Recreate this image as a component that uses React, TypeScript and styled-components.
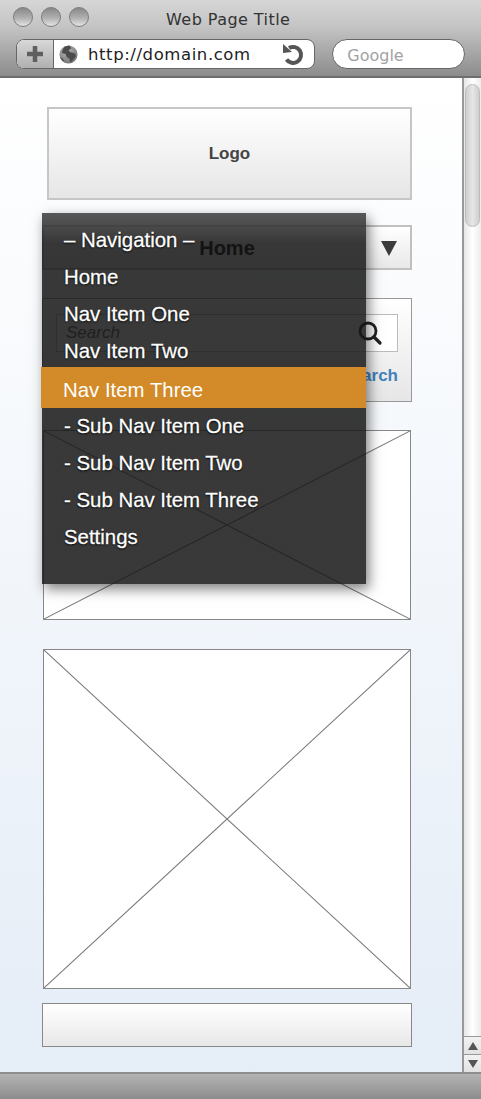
import React from "react";
import styled, { createGlobalStyle } from "styled-components";

////////////////////////////////////////////////////////////////////////////////
// Data
////////////////////////////////////////////////////////////////////////////////
const navItems = [
  { label: "– Navigation –" },
  { label: "Home" },
  { label: "Nav Item One" },
  { label: "Nav Item Two" },
  { label: "Nav Item Three", active: true },
  { label: "- Sub Nav Item One" },
  { label: "- Sub Nav Item Two" },
  { label: "- Sub Nav Item Three" },
  { label: "Settings" },
];

////////////////////////////////////////////////////////////////////////////////
// Styles
////////////////////////////////////////////////////////////////////////////////
const GlobalStyle = createGlobalStyle`
  html, body {
    margin: 0;
    padding: 0;
    background: #fff;
    font-family: "Liberation Sans", Arial, sans-serif;
  }
`;

const Window = styled.div`
  width: 481px;
  height: 1099px;
  display: flex;
  flex-direction: column;
  overflow: hidden;
`;

const Chrome = styled.header`
  height: 78px;
  box-sizing: border-box;
  flex: none;
  padding: 7px 16px 0;
  border-bottom: 2px solid #6e6e6e;
  background: linear-gradient(#d6d6d6, #c4c4c4 35%, #8c8c8c);
`;

const TitleRow = styled.div`
  height: 32px;
  display: flex;
  align-items: flex-start;
`;

const Lights = styled.div`
  display: flex;
  gap: 8px;
  margin-left: -3px;
`;

const Light = styled.span`
  width: 20px;
  height: 20px;
  box-sizing: border-box;
  border-radius: 50%;
  border: 1px solid #7c7c7c;
  background: linear-gradient(#888, #b0b0b0 55%, #e4e4e4);
`;

const PageTitle = styled.div`
  flex: 1;
  margin: 3px 0 0 77px;
  color: #333;
  font-family: "DejaVu Sans", sans-serif;
  font-size: 16px;
  line-height: 20px;
  letter-spacing: 0.45px;
`;

const ToolRow = styled.div`
  display: flex;
  gap: 17px;
`;

const AddressBar = styled.div`
  width: 300px;
  height: 30px;
  box-sizing: border-box;
  display: flex;
  align-items: center;
  overflow: hidden;
  border: 1px solid #666;
  border-radius: 8px;
  background: #fff;
`;

const AddButton = styled.div`
  width: 36px;
  height: 100%;
  flex: none;
  display: flex;
  align-items: center;
  justify-content: center;
  border-right: 1px solid #666;
  background: linear-gradient(#d8d8d8, #b0b0b0);
`;

const PlusMark = styled.svg`
  width: 18px;
  height: 18px;
`;

const Globe = styled.svg`
  width: 19px;
  height: 19px;
  margin-left: 5px;
  flex: none;
`;

const Url = styled.div`
  flex: 1;
  margin: 1px 0 0 10px;
  color: #222;
  font-family: "DejaVu Sans", sans-serif;
  font-size: 16.5px;
  letter-spacing: 0.58px;
`;

const Reload = styled.svg`
  width: 24px;
  height: 24px;
  margin: 2px 9px 0 0;
  flex: none;
`;

const GoogleBox = styled.div`
  width: 133px;
  height: 30px;
  box-sizing: border-box;
  padding-left: 14px;
  border: 1px solid #666;
  border-radius: 15px;
  background: #fff;
  color: #a2a2a2;
  font-family: "DejaVu Sans", sans-serif;
  font-size: 16px;
  line-height: 31px;
`;

const Body = styled.div`
  position: relative;
  flex: 1;
  min-height: 0;
  display: flex;
`;

const Page = styled.main`
  flex: 1;
  box-sizing: border-box;
  padding: 29px 50px 0 42px;
  display: flex;
  flex-direction: column;
  background: linear-gradient(#fff, #e5edf7);
`;

const Logo = styled.div`
  height: 93px;
  box-sizing: border-box;
  margin-left: 5px;
  display: flex;
  align-items: center;
  justify-content: center;
  border: 2px solid #c6c6c6;
  background: linear-gradient(#fff, #e6e6e6);
  color: #444;
  font-size: 17px;
  font-weight: bold;
`;

const Select = styled.div`
  height: 45px;
  box-sizing: border-box;
  margin-top: 25px;
  padding-top: 1px;
  position: relative;
  display: flex;
  align-items: center;
  justify-content: center;
  border: 2px solid #c0c0c0;
  background: linear-gradient(#fff, #e8e8e8);
  color: #000;
  font-size: 20px;
  font-weight: bold;
`;

const Caret = styled.span`
  position: absolute;
  right: 13px;
  top: 14px;
  width: 0;
  height: 0;
  border-left: 8px solid transparent;
  border-right: 8px solid transparent;
  border-top: 15px solid #3c3c3c;
`;

const SearchPanel = styled.div`
  height: 104px;
  box-sizing: border-box;
  margin-top: 28px;
  padding: 15px 13px 0 13px;
  border: 1px solid #999;
  background: linear-gradient(#fff, #e6e6e6);
`;

const SearchField = styled.div`
  height: 38px;
  box-sizing: border-box;
  padding: 0 14px 0 9px;
  display: flex;
  align-items: center;
  justify-content: space-between;
  border: 1px solid #bbb;
  background: #fff;
  color: #555;
  font-size: 17px;
  font-style: italic;
`;

const Lens = styled.svg`
  width: 26px;
  height: 26px;
  margin-bottom: 1px;
`;

const SearchLink = styled.div`
  margin-top: 14px;
  text-align: right;
  color: #3f82bd;
  font-size: 17px;
  font-weight: bold;
  line-height: 20px;
`;

const Placeholder = styled.div<{ $height: number; $gap: number }>`
  height: ${(p) => p.$height}px;
  box-sizing: border-box;
  margin: ${(p) => p.$gap}px 1px 0 1px;
  border: 1px solid #888;
  background: #fff;
`;

const Cross = styled.svg`
  display: block;
  width: 100%;
  height: 100%;
`;

const BottomBar = styled.div`
  height: 44px;
  box-sizing: border-box;
  margin-top: 14px;
  border: 1px solid #888;
  background: linear-gradient(#fff, #e8e8e8);
`;

const ScrollBar = styled.aside`
  width: 19px;
  flex: none;
  box-sizing: border-box;
  display: flex;
  flex-direction: column;
  padding-top: 6px;
  border-left: 2px solid #999;
  background: linear-gradient(90deg, #e6e6e6, #fff 50%, #ececec);
`;

const Thumb = styled.div`
  height: 143px;
  flex: none;
  box-sizing: border-box;
  margin: 0 1px;
  border: 1px solid #bcbcbc;
  border-radius: 8px;
  background: linear-gradient(90deg, #cfcfcf, #e6e6e6 50%, #cfcfcf);
`;

const Track = styled.div`
  flex: 1;
`;

const Arrow = styled.div<{ $up?: boolean }>`
  height: 17px;
  flex: none;
  display: flex;
  align-items: center;
  justify-content: center;
  border-top: 1px solid #999;
  background: linear-gradient(#f2f2f2, #e2e2e2);

  &::before {
    content: "";
    border-left: 5px solid transparent;
    border-right: 5px solid transparent;
    ${(p) => (p.$up ? "border-bottom" : "border-top")}: 8px solid #555;
  }
`;

const StatusBar = styled.footer`
  height: 27px;
  flex: none;
  box-sizing: border-box;
  border-top: 2px solid #8e8e8e;
  background: linear-gradient(#b4b4b4, #8c8c8c);
`;

const NavMenu = styled.nav`
  position: absolute;
  left: 42px;
  top: 135px;
  width: 324px;
  height: 371px;
  box-sizing: border-box;
  padding-top: 9px;
  background: linear-gradient(rgba(70, 70, 70, 0.9), rgba(22, 22, 22, 0.85) 30px);
  box-shadow: 3px 5px 12px rgba(0, 0, 0, 0.5);
`;

const NavRow = styled.div<{ $active?: boolean }>`
  box-sizing: border-box;
  height: ${(p) => (p.$active ? 41 : 37)}px;
  margin: ${(p) => (p.$active ? "-3px 0 0 -1px" : "0")};
  padding: ${(p) => (p.$active ? "5px 0 0 22px" : "0 0 0 22px")};
  background: ${(p) => (p.$active ? "#d38a28" : "transparent")};
  color: #fff;
  font-size: 20.4px;
  line-height: 37px;
  -webkit-text-stroke: ${(p) => (p.$active ? "0" : "0.3px #fff")};
  text-shadow: ${(p) => (p.$active ? "none" : "0 1px 2px #000, 0 0 1px #000")};
`;

////////////////////////////////////////////////////////////////////////////////
// Parts
////////////////////////////////////////////////////////////////////////////////
const CrossBox: React.FC<{ height: number; gap: number }> = ({ height, gap }) => (
  <Placeholder $height={height} $gap={gap}>
    <Cross viewBox="0 0 100 100" preserveAspectRatio="none">
      <line x1="0" y1="0" x2="100" y2="100" stroke="#777" strokeWidth="1" vectorEffect="non-scaling-stroke" />
      <line x1="100" y1="0" x2="0" y2="100" stroke="#777" strokeWidth="1" vectorEffect="non-scaling-stroke" />
    </Cross>
  </Placeholder>
);

////////////////////////////////////////////////////////////////////////////////
// Export
////////////////////////////////////////////////////////////////////////////////
const App: React.FC = () => {
  return (
    <Window>
      <GlobalStyle />
      <Chrome>
        <TitleRow>
          <Lights>
            <Light />
            <Light />
            <Light />
          </Lights>
          <PageTitle>Web Page Title</PageTitle>
        </TitleRow>
        <ToolRow>
          <AddressBar>
            <AddButton>
              <PlusMark viewBox="0 0 18 18">
                <path d="M9 1v16M1 9h16" stroke="#5f5f5f" strokeWidth="4.5" fill="none" />
              </PlusMark>
            </AddButton>
            <Globe viewBox="0 0 20 20">
              <defs>
                <radialGradient id="ocean" cx="0.4" cy="0.3" r="0.8">
                  <stop offset="0" stopColor="#b4b4b4" />
                  <stop offset="1" stopColor="#6f6f6f" />
                </radialGradient>
              </defs>
              <circle cx="10" cy="10" r="9.5" fill="url(#ocean)" />
              <path d="M6 1.5l5-1 2 3-3 2 2 2 4 1 2 3-3 4-3 3-1-4-3-2-1-3-4-1 1-4z" fill="#4c4c4c" />
              <path d="M1 13l3 1 2 4-3-2z" fill="#5a5a5a" />
            </Globe>
            <Url>http://domain.com</Url>
            <Reload viewBox="0 0 24 24">
              <path d="M8 5A8 8 0 1 1 5.5 16.5" stroke="#555" strokeWidth="4" fill="none" />
              <polygon points="2,1 2,10 11,9" fill="#555" />
            </Reload>
          </AddressBar>
          <GoogleBox>Google</GoogleBox>
        </ToolRow>
      </Chrome>
      <Body>
        <Page>
          <Logo>Logo</Logo>
          <Select>
            Home
            <Caret />
          </Select>
          <SearchPanel>
            <SearchField>
              Search
              <Lens viewBox="0 0 26 26">
                <circle cx="11" cy="11" r="8" stroke="#222" strokeWidth="2.8" fill="none" />
                <path d="M17 17l6 6" stroke="#222" strokeWidth="3.2" strokeLinecap="round" />
              </Lens>
            </SearchField>
            <SearchLink>Search</SearchLink>
          </SearchPanel>
          <CrossBox height={190} gap={28} />
          <CrossBox height={340} gap={29} />
          <BottomBar />
        </Page>
        <ScrollBar>
          <Thumb />
          <Track />
          <Arrow $up />
          <Arrow />
        </ScrollBar>
        <NavMenu>
          {navItems.map((item) => (
            <NavRow key={item.label} $active={item.active}>
              {item.label}
            </NavRow>
          ))}
        </NavMenu>
      </Body>
      <StatusBar />
    </Window>
  );
};

export default App;
